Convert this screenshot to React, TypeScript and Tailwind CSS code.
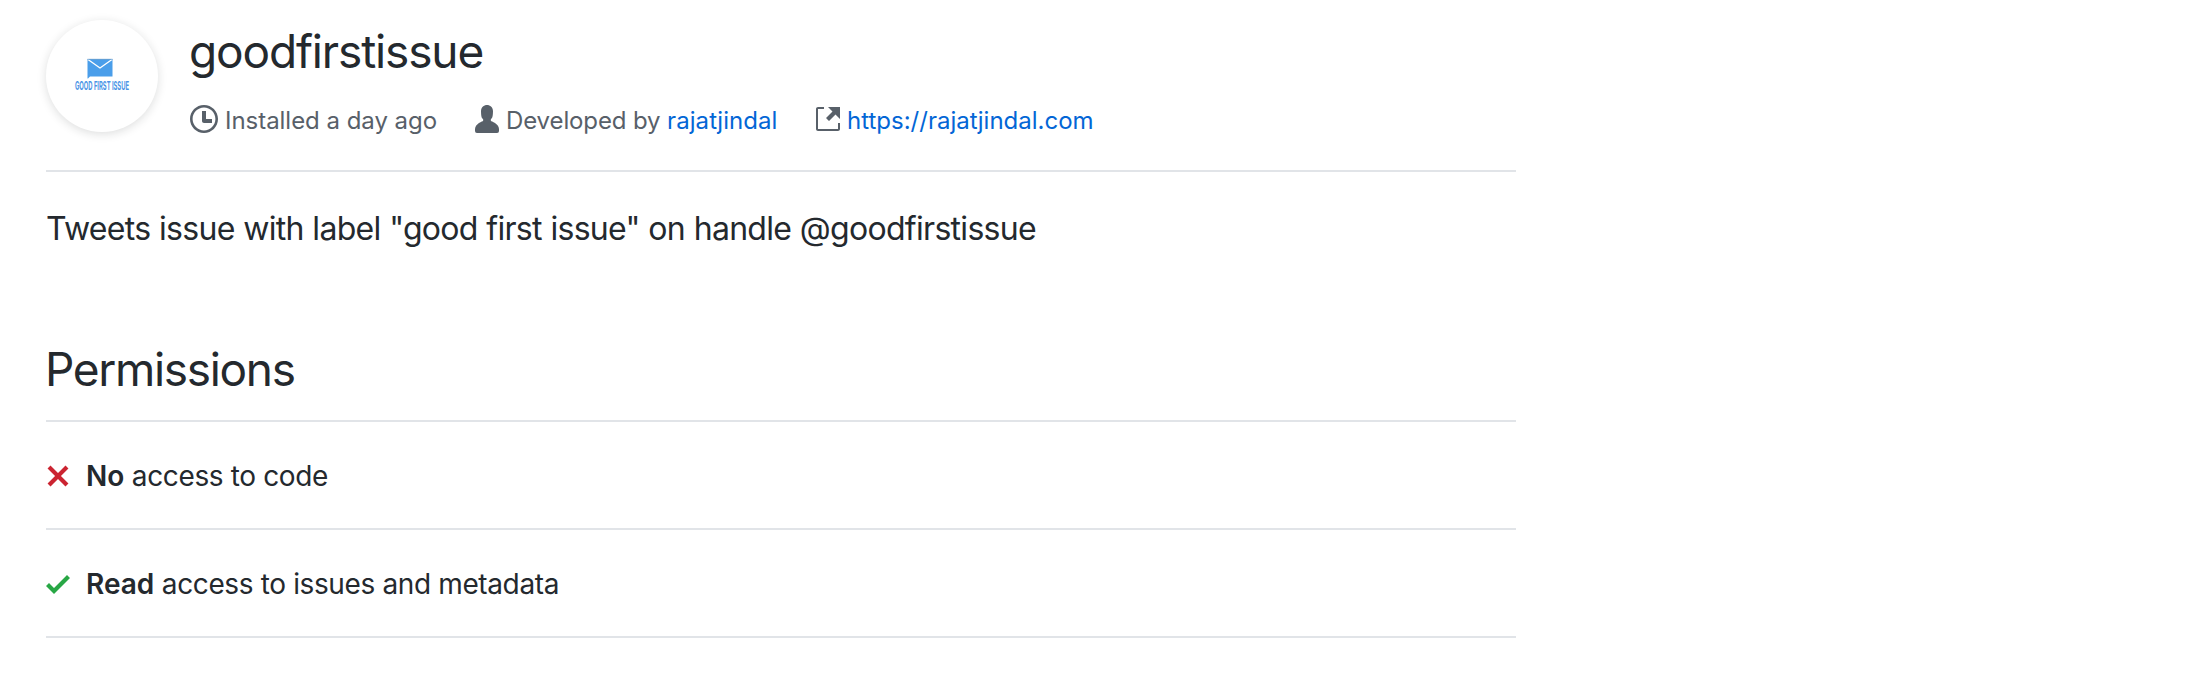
import type { ReactNode } from "react";

const icons = {
  clock: {
    width: 14,
    d: "M8 8h3v2H7c-.55 0-1-.45-1-1V4h2v4zM7 2.3c3.14 0 5.7 2.56 5.7 5.7s-2.56 5.7-5.7 5.7A5.71 5.71 0 0 1 1.3 8c0-3.14 2.56-5.7 5.7-5.7zM7 1C3.14 1 0 4.14 0 8s3.14 7 7 7 7-3.14 7-7-3.14-7-7-7z",
  },
  person: {
    width: 12,
    d: "M12 14.002a.998.998 0 0 1-.998.998H1.001A1 1 0 0 1 0 13.999V13c0-2.633 4-4 4-4s.229-.409 0-1c-.841-.62-.944-1.59-1-4 .173-2.413 1.867-3 3-3s2.827.586 3 3c-.056 2.41-.159 3.38-1 4-.229.59 0 1 0 1s4 1.367 4 4v1.002z",
  },
  external: {
    width: 12,
    d: "M11 10h1v3c0 .55-.45 1-1 1H1c-.55 0-1-.45-1-1V3c0-.55.45-1 1-1h3v1H1v10h10v-3zM6 2l2.25 2.25L5 7.5 6.5 9l3.25-3.25L12 8V2H6z",
  },
  x: {
    width: 12,
    d: "M7.48 8l3.75 3.75-1.48 1.48L6 9.48l-3.75 3.75-1.48-1.48L4.52 8 .77 4.25l1.48-1.48L6 6.52l3.75-3.75 1.48 1.48L7.48 8z",
  },
  check: { width: 12, d: "M12 5l-8 8-4-4 1.5-1.5L4 10l6.5-6.5L12 5z" },
};

function Icon({ name, className }: { name: keyof typeof icons; className?: string }) {
  const { width, d } = icons[name];
  return (
    <svg
      width={width * 2}
      height={32}
      viewBox={`0 0 ${width} 16`}
      fill="currentColor"
      aria-hidden="true"
      className={`shrink-0 ${className ?? ""}`}
    >
      <path fillRule="evenodd" d={d} />
    </svg>
  );
}

function AppBadge() {
  return (
    <div className="size-28 shrink-0 rounded-full bg-white shadow-[0_2px_10px_rgba(27,31,35,0.15)]">
      <svg width="112" height="112" viewBox="0 0 112 112" className="overflow-visible">
        <path d="M41.5 39h25v17.5h-22.5l-2 2h-.5z" fill="#4a9eea" />
        <path d="M42 39.5l12 8.5 12-8.5" fill="none" stroke="#ffffff" strokeWidth="1.3" />
        <path d="M41.5 39.3h25" stroke="#6f9fcb" strokeWidth="0.8" />
        <text
          x="29"
          y="70"
          textLength="54"
          lengthAdjust="spacingAndGlyphs"
          fill="#4a94e6"
          className="font-['Inter',sans-serif] text-[12px] font-bold"
        >
          GOOD FIRST ISSUE
        </text>
      </svg>
    </div>
  );
}

function Permission({ icon, level, children }: { icon: ReactNode; level: string; children: ReactNode }) {
  return (
    <li className="flex h-[108px] items-center border-b-2 border-[#e1e4e8] text-[28px] leading-[42px]">
      <span className="mr-4 flex pt-px">{icon}</span>
      <p className="pt-0.5 tracking-[-0.37px]">
        <strong className="font-semibold tracking-normal">{level}</strong> {children}
      </p>
    </li>
  );
}

export default function App() {
  return (
    <main className="min-h-[694px] bg-white pl-[46px] font-['Inter',sans-serif] text-[#24292e]">
      <div className="w-[1470px]">
        <header className="flex h-[172px] items-start gap-8 border-b-2 border-[#e1e4e8] pt-5">
          <AppBadge />
          <div className="pt-0.5">
            <h1 className="-ml-px text-[46px] leading-[58px] tracking-[-1.14px]">goodfirstissue</h1>
            <ul className="mt-[23px] flex h-9 text-2xl leading-9 text-[#586069]">
              <li className="flex w-[285px] gap-[7px]">
                <Icon name="clock" />
                <span className="tracking-[-0.03px]">Installed a day ago</span>
              </li>
              <li className="flex w-[341px] gap-[7px]">
                <Icon name="person" />
                <span className="whitespace-nowrap tracking-[-0.12px]">
                  Developed by <a className="tracking-[0.06px] text-[#0366d6]">rajatjindal</a>
                </span>
              </li>
              <li className="flex gap-[7px]">
                <Icon name="external" />
                <a className="text-[#0366d6]">https://rajatjindal.com</a>
              </li>
            </ul>
          </div>
        </header>
        <p className="pt-[33px] text-[32px] leading-[48px] tracking-[-0.7px] [word-spacing:0.3px]">
          Tweets issue with label "good first issue" on handle @goodfirstissue
        </p>
        <section className="mt-[87px]">
          <h2 className="h-[82px] border-b-2 border-[#e1e4e8] text-[46px] leading-[58px] tracking-[-1.32px]">
            <span className="-ml-px">Permissions</span>
          </h2>
          <ul>
            <Permission icon={<Icon name="x" className="text-[#cb2431]" />} level="No">
              access to code
            </Permission>
            <Permission icon={<Icon name="check" className="text-[#28a745]" />} level="Read">
              access to issues and metadata
            </Permission>
          </ul>
        </section>
      </div>
    </main>
  );
}
